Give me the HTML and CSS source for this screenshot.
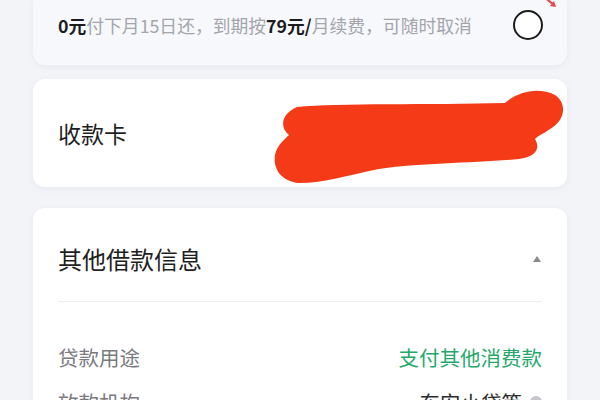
FILE: index.html
```html
<!DOCTYPE html>
<html lang="zh-CN">
<head>
<meta charset="utf-8">
<link rel="stylesheet" href="styles.css">
</head>
<body>
<div class="page">
  <div class="card plan">
    <div class="plan-row">
      <p class="plan-text"><b>0元</b>付下月15日还，到期按<b>79元/</b>月续费，可随时取消</p>
      <span class="radio"></span>
    </div>
    <svg class="arrow" width="20" height="10" viewBox="0 0 20 10"><path d="M2 -4 L13 5" stroke="#e4494f" stroke-width="2.2" fill="none" stroke-linecap="round"/><path d="M9 6 L15 7 L13 1 Z" fill="#e4494f"/></svg>
  </div>

  <div class="card bank">
    <span class="bank-label">收款卡</span>
    <svg class="scribble" width="300" height="100" viewBox="0 0 300 100">
      <path d="M28 18 C70 14 160 16 236 14 C250 2 270 -2 286 6 C298 14 296 30 284 38 C276 44 270 46 266 50 C272 60 266 68 250 70 C210 74 150 74 110 80 C80 86 55 94 30 94 C12 92 4 80 6 66 C8 56 16 50 20 46 C12 40 10 26 28 18 Z" fill="#f53a17"/>
    </svg>
  </div>

  <div class="card info">
    <div class="info-head">
      <span class="info-title">其他借款信息</span>
      <span class="caret"></span>
    </div>
    <div class="divider"></div>
    <div class="info-rows">
      <div class="info-row">
        <span class="info-label">贷款用途</span>
        <span class="info-value green">支付其他消费款</span>
      </div>
      <div class="info-row">
        <span class="info-label">放款机构</span>
        <span class="info-value">东安小贷等<span class="qmark"></span></span>
      </div>
    </div>
  </div>
</div>
</body>
</html>
```

FILE: styles.css
```css
* { box-sizing: border-box; }
html, body {
  margin: 0;
  padding: 0;
  background: #f3f4f8;
  font-family: "Noto Sans CJK SC", "Noto Sans", sans-serif;
  width: 600px;
  height: 400px;
  overflow: hidden;
}
.page {
  display: flex;
  flex-direction: column;
  padding: 0 33px;
}
.card {
  background: #ffffff;
  border-radius: 12px;
  box-shadow: 0 2px 8px rgba(30, 40, 80, 0.05);
  position: relative;
}
.plan {
  background: #f7f8fb;
  border-radius: 0 0 12px 12px;
  padding: 0 25px 15px 25px;
  height: 65px;
}
.plan-row {
  height: 50px;
  display: flex;
  align-items: center;
  justify-content: space-between;
}
.plan-text {
  margin: 0;
  font-size: 17.8px;
  color: #a3a5ab;
  line-height: 24px;
}
.plan-text b {
  color: #1c1c1e;
  font-weight: 700;
}
.radio {
  width: 30px;
  height: 30px;
  border: 2.4px solid #1c1c1e;
  border-radius: 50%;
  margin-right: -1px;
  background: #fff;
}
.arrow {
  position: absolute;
  left: 508px;
  top: 0;
}
.bank {
  margin-top: 14px;
  height: 108px;
  display: flex;
  align-items: center;
  padding: 0 25px;
}
.bank-label {
  font-size: 23px;
  color: #1f1f1f;
  line-height: 30px;
}
.scribble {
  position: absolute;
  left: 236px;
  top: 10px;
}
.info {
  margin-top: 21px;
  padding: 0 25px;
  height: 240px;
  border-radius: 12px 12px 0 0;
}
.info-head {
  display: flex;
  align-items: center;
  justify-content: space-between;
  padding: 36px 0 27px 0;
}
.info-title {
  font-size: 24px;
  line-height: 30px;
  color: #1f1f1f;
  font-weight: 400;
}
.caret {
  width: 0;
  height: 0;
  border-left: 4px solid transparent;
  border-right: 4px solid transparent;
  border-bottom: 6px solid #8a8a8a;
  margin-right: 1px;
}
.divider {
  height: 1px;
  background: #efeff2;
}
.info-rows {
  display: flex;
  flex-direction: column;
  gap: 15px;
  padding-top: 40px;
}
.info-row {
  display: flex;
  align-items: center;
  justify-content: space-between;
  line-height: 30px;
  font-size: 20.5px;
}
.info-label {
  color: #7a7a7f;
}
.info-value {
  color: #2b2b2e;
  display: flex;
  align-items: center;
  gap: 8px;
}
.info-value.green {
  color: #26a86b;
}
.qmark {
  width: 12px;
  height: 12px;
  border-radius: 50%;
  background: #c6c6cb;
}
```
